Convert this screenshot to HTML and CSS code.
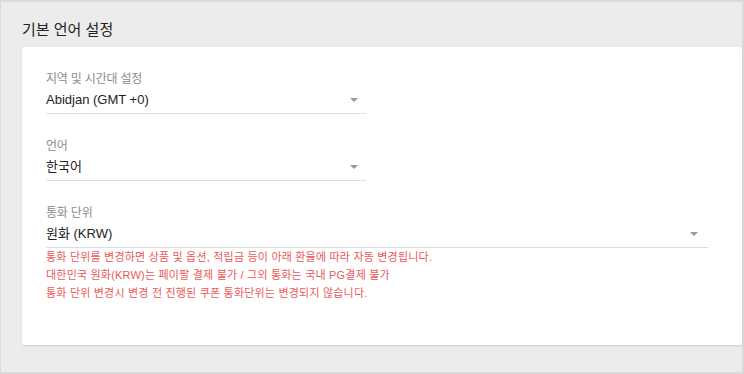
FILE: index.html
```html
<!DOCTYPE html>
<html lang="ko">
<head>
<meta charset="utf-8">
<link rel="stylesheet" href="styles.css">
</head>
<body>
<div class="frame">
  <h2 class="title">기본 언어 설정</h2>
  <div class="card">
    <div class="field">
      <div class="label">지역 및 시간대 설정</div>
      <div class="select">
        <span class="value">Abidjan (GMT +0)</span>
        <span class="arrow"></span>
      </div>
    </div>
    <div class="field">
      <div class="label">언어</div>
      <div class="select">
        <span class="value">한국어</span>
        <span class="arrow"></span>
      </div>
    </div>
    <div class="field wide">
      <div class="label">통화 단위</div>
      <div class="select">
        <span class="value">원화 (KRW)</span>
        <span class="arrow"></span>
      </div>
      <div class="notes">
        <p>통화 단위를 변경하면 상품 및 옵션, 적립금 등이 아래 환율에 따라 자동 변경됩니다.</p>
        <p>대한민국 원화(KRW)는 페이팔 결제 불가 / 그외 통화는 국내 PG결제 불가</p>
        <p>통화 단위 변경시 변경 전 진행된 쿠폰 통화단위는 변경되지 않습니다.</p>
      </div>
    </div>
  </div>
</div>
</body>
</html>
```
FILE: styles.css
```css
* { box-sizing: border-box; }
html, body { margin: 0; padding: 0; }
body {
  width: 744px;
  height: 374px;
  font-family: "Liberation Sans", "Noto Sans CJK KR", sans-serif;
  background: #ececec;
  overflow: hidden;
}
.frame {
  width: 744px;
  height: 374px;
  border: 2px solid #dadada;
  border-left-width: 1px;
  padding: 15px 0 0 21px;
}
.title {
  margin: 0 0 6px 0;
  font-family: "Noto Sans CJK KR", sans-serif;
  font-size: 15px;
  line-height: 24px;
  font-weight: normal;
  color: #222;
}
.card {
  background: #fff;
  width: 720px;
  height: 298px;
  border-radius: 2px;
  box-shadow: 0 1px 2px rgba(0,0,0,0.12);
  padding: 22px 0 0 24px;
}
.field {
  width: 320px;
  margin-bottom: 22px;
}
.field.wide { width: 662px; margin-bottom: 0; }
.label {
  font-family: "Noto Sans CJK KR", sans-serif;
  font-size: 12px;
  line-height: 18px;
  letter-spacing: -0.2px;
  color: #8c8c8c;
}
.select {
  height: 27px;
  display: flex;
  align-items: center;
  justify-content: space-between;
  border-bottom: 1px solid #dedede;
  padding-right: 8px;
}
.field.wide .select { padding-right: 10px; }
.value {
  font-family: "Liberation Sans", "Noto Sans CJK KR", sans-serif;
  font-size: 13px;
  line-height: 20px;
  color: #222;
}
.arrow {
  width: 0;
  height: 0;
  border-left: 4px solid transparent;
  border-right: 4px solid transparent;
  border-top: 4px solid #9a9a9a;
}
.notes p {
  margin: 0;
  font-size: 11px;
  line-height: 18px;
  letter-spacing: 0.2px;
  color: #eb5a5a;
}
```
